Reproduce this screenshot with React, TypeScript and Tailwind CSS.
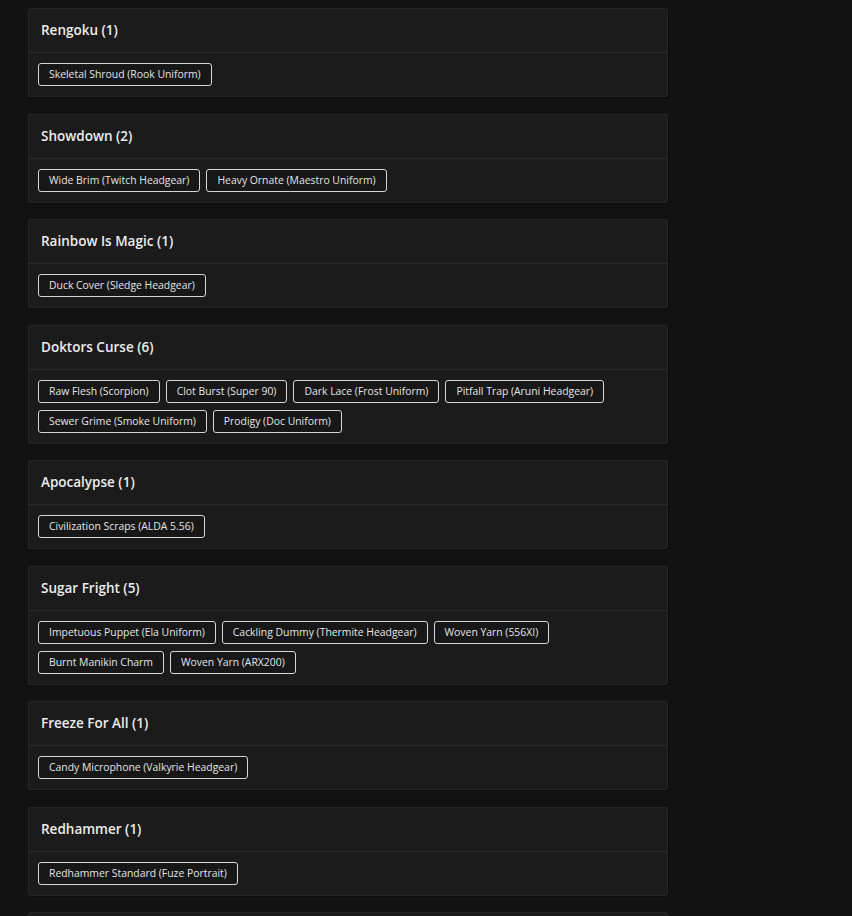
const events: { name: string; items: string[] }[] = [
	{ name: 'Rengoku', items: ['Skeletal Shroud (Rook Uniform)'] },
	{ name: 'Showdown', items: ['Wide Brim (Twitch Headgear)', 'Heavy Ornate (Maestro Uniform)'] },
	{ name: 'Rainbow Is Magic', items: ['Duck Cover (Sledge Headgear)'] },
	{
		name: 'Doktors Curse',
		items: [
			'Raw Flesh (Scorpion)',
			'Clot Burst (Super 90)',
			'Dark Lace (Frost Uniform)',
			'Pitfall Trap (Aruni Headgear)',
			'Sewer Grime (Smoke Uniform)',
			'Prodigy (Doc Uniform)',
		],
	},
	{ name: 'Apocalypse', items: ['Civilization Scraps (ALDA 5.56)'] },
	{
		name: 'Sugar Fright',
		items: [
			'Impetuous Puppet (Ela Uniform)',
			'Cackling Dummy (Thermite Headgear)',
			'Woven Yarn (556XI)',
			'Burnt Manikin Charm',
			'Woven Yarn (ARX200)',
		],
	},
	{ name: 'Freeze For All', items: ['Candy Microphone (Valkyrie Headgear)'] },
	{ name: 'Redhammer', items: ['Redhammer Standard (Fuze Portrait)'] },
]

function EventCard({ name, items }: { name: string; items: string[] }) {
	return (
		<div className="bg-[#1b1b1b] border border-[#262626] rounded-[2px] shadow-[1px_1px_0_#0c0c0c] mb-[16.5px]">
			<div className="h-[44px] flex items-center px-3 border-b border-[#2a2a2a] text-[13.5px] font-semibold text-[#ececec]">
				{name} ({items.length})
			</div>
			<div className="flex flex-wrap gap-x-[6px] gap-y-[7px] pl-[9px] pr-3 pt-[10px] pb-[10px]">
				{items.map((item) => (
					<span
						key={item}
						className="h-[23px] flex items-center px-[10px] border border-[#d6d6d6] rounded-[3px] bg-[#171717] text-[10.4px] text-[#e4e4e4] leading-none"
					>
						{item}
					</span>
				))}
			</div>
		</div>
	)
}

export default function App() {
	return (
		<div
			className="h-[916px] overflow-hidden bg-[#121212] pt-2"
			style={{ fontFamily: '"Open Sans", Inter, sans-serif' }}
		>
			<div className="w-[640px] ml-[28px]">
				{events.map((e) => (
					<EventCard key={e.name} name={e.name} items={e.items} />
				))}
				{/* next card, only its top edge is visible */}
				<div className="h-[44px] bg-[#1b1b1b] border border-[#262626] rounded-[2px]" />
			</div>
		</div>
	)
}
